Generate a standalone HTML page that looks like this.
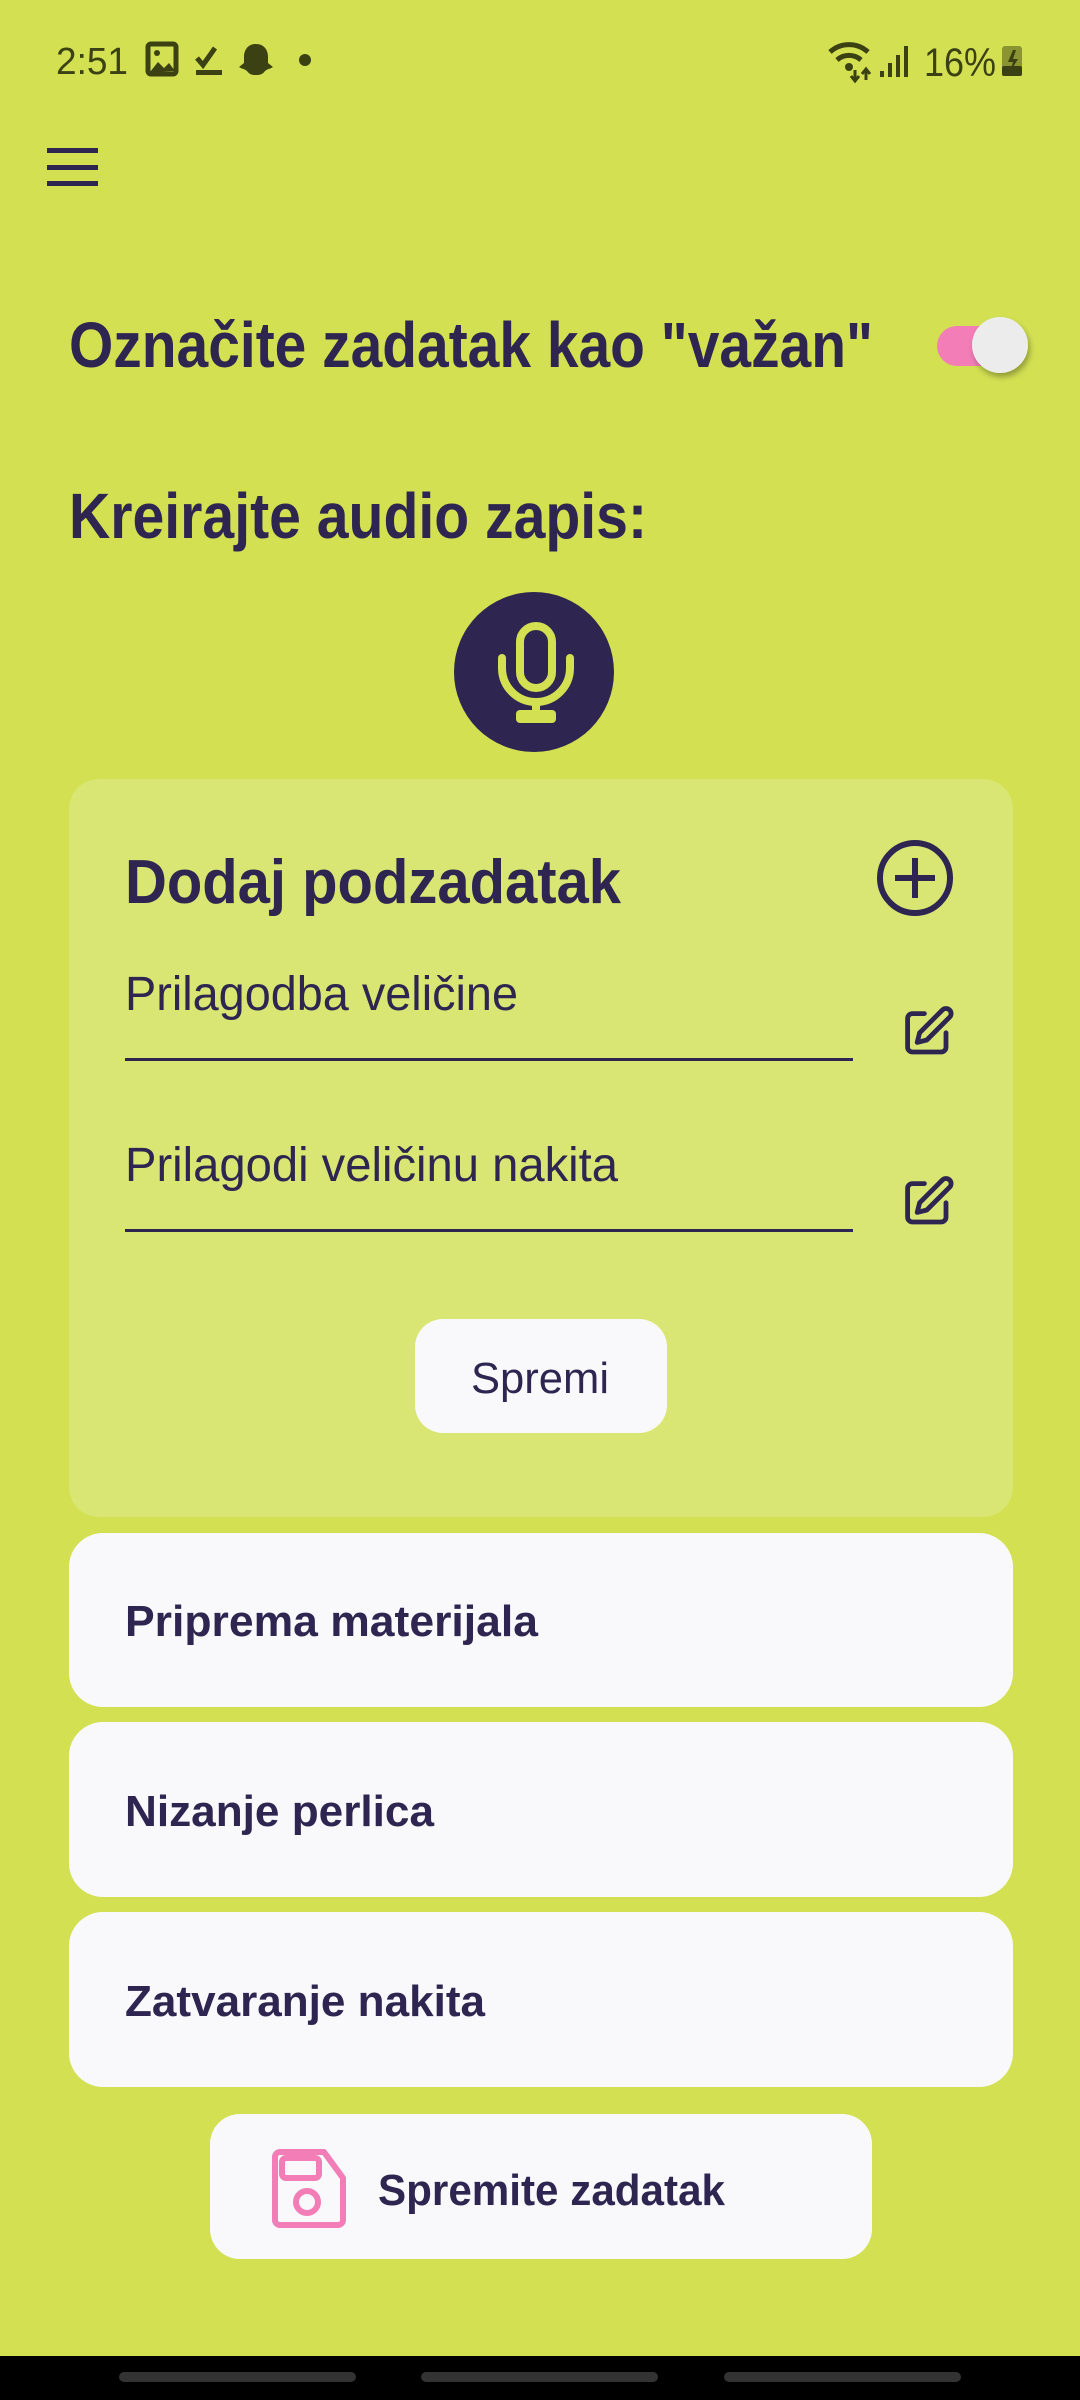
<!DOCTYPE html>
<html><head><meta charset="utf-8"><style>
html,body{margin:0;padding:0;width:1080px;height:2400px;overflow:hidden;background:#d2e052}
svg{display:block}
text{font-family:"Liberation Sans",sans-serif}
</style></head><body>
<svg width="1080" height="2400" viewBox="0 0 1080 2400" xmlns="http://www.w3.org/2000/svg">
<defs>
<filter id="sh" x="-50%" y="-50%" width="200%" height="200%"><feDropShadow dx="2" dy="4" stdDeviation="3" flood-color="#000" flood-opacity="0.3"/></filter>
</defs>
<rect width="1080" height="2400" fill="#d2e052"/>
<!-- status bar -->
<g fill="#3c4114">
<text x="56" y="74" font-size="38" textLength="72" lengthAdjust="spacingAndGlyphs">2:51</text>
<rect x="148" y="44" width="28" height="30" rx="3" fill="none" stroke="#3c4114" stroke-width="5"/>
<path d="M150 72 l8-10 6 6 5-5 6 8z"/>
<circle cx="157" cy="53" r="3"/>
<path d="M197 58 l6 7 12-17" fill="none" stroke="#3c4114" stroke-width="5"/>
<rect x="196" y="70" width="26" height="5"/>
<path d="M256 44 c-8 0-12 6-12 13 v6 l-5 4 c3 2 6 2 8 4 c3 4 6 4 9 4 s6 0 9-4 c2-2 5-2 8-4 l-5-4 v-6 c0-7-4-13-12-13z"/>
<circle cx="305" cy="60" r="6"/>
<path d="M830 52 a28 28 0 0 1 38 0" fill="none" stroke="#3c4114" stroke-width="5"/>
<path d="M837 60 a18 18 0 0 1 24 0" fill="none" stroke="#3c4114" stroke-width="5"/>
<circle cx="849" cy="67" r="4"/>
<path d="M855 70 v10 M851 76 l4 5 4-5 M866 80 v-10 M862 74 l4-5 4 5" fill="none" stroke="#3c4114" stroke-width="3"/>
<rect x="880" y="71" width="4" height="6"/><rect x="888" y="63" width="4" height="14"/><rect x="896" y="55" width="4" height="22"/><rect x="904" y="46" width="4" height="31"/>
<text x="924" y="76" font-size="40" textLength="72" lengthAdjust="spacingAndGlyphs">16%</text>
<rect x="1002" y="46" width="20" height="30" rx="3" fill="#8a9430"/>
<rect x="1002" y="66" width="20" height="10" rx="2"/>
<path d="M1013 50 l-5 12 h5 l-3 10 8-13 h-5 l3-9z"/>
</g>
<!-- hamburger -->
<g fill="#2e2650"><rect x="47" y="148" width="51" height="5"/><rect x="47" y="165" width="51" height="5"/><rect x="47" y="181" width="51" height="5"/></g>
<!-- title -->
<text x="69" y="367" font-size="64" font-weight="bold" fill="#2e2650" textLength="804" lengthAdjust="spacingAndGlyphs">Označite zadatak kao "važan"</text>
<rect x="937" y="326" width="70" height="40" rx="20" fill="#f27db7"/>
<circle cx="1000" cy="345" r="28" fill="#ececec" filter="url(#sh)"/>
<text x="69" y="538" font-size="64" font-weight="bold" fill="#2e2650" textLength="578" lengthAdjust="spacingAndGlyphs">Kreirajte audio zapis:</text>
<!-- mic -->
<circle cx="534" cy="672" r="80" fill="#2e2650"/>
<g fill="none" stroke="#d2e052" stroke-width="8" stroke-linecap="round">
<rect x="520" y="626" width="32" height="62" rx="16"/>
<path d="M502 658 v10 a34 34 0 0 0 68 0 v-10"/>
<path d="M536 702 v10"/>
</g>
<rect x="516" y="710" width="40" height="13" rx="4" fill="#d2e052"/>
<!-- card -->
<rect x="69" y="779" width="944" height="738" rx="30" fill="#d9e673"/>
<text x="125" y="903" font-size="62" font-weight="bold" fill="#2e2650" textLength="496" lengthAdjust="spacingAndGlyphs">Dodaj podzadatak</text>
<g fill="none" stroke="#2e2650" stroke-width="6">
<circle cx="915" cy="878" r="35"/>
<path d="M915 858 v40 M895 878 h40"/>
</g>
<text x="125" y="1010" font-size="48" fill="#2e2650" textLength="393" lengthAdjust="spacingAndGlyphs">Prilagodba veličine</text>
<rect x="125" y="1058" width="728" height="3" fill="#2e2650"/>
<text x="125" y="1181" font-size="48" fill="#2e2650" textLength="493" lengthAdjust="spacingAndGlyphs">Prilagodi veličinu nakita</text>
<rect x="125" y="1229" width="728" height="3" fill="#2e2650"/>
<g fill="none" stroke="#2e2650" stroke-width="2" stroke-linejoin="round" stroke-linecap="round">
<g transform="translate(898,1004) scale(2.4)"><path d="M11 4H6a2 2 0 0 0-2 2v12a2 2 0 0 0 2 2h12a2 2 0 0 0 2-2v-6"/><path d="M18.5 2.5a2.1 2.1 0 0 1 3 3L12 15l-4 1 1-4z"/></g>
<g transform="translate(898,1174) scale(2.4)"><path d="M11 4H6a2 2 0 0 0-2 2v12a2 2 0 0 0 2 2h12a2 2 0 0 0 2-2v-6"/><path d="M18.5 2.5a2.1 2.1 0 0 1 3 3L12 15l-4 1 1-4z"/></g>
</g>
<rect x="415" y="1319" width="252" height="114" rx="28" fill="#f9f9fb"/>
<text x="540" y="1393" font-size="44" fill="#2e2650" text-anchor="middle" textLength="138" lengthAdjust="spacingAndGlyphs">Spremi</text>
<!-- list -->
<rect x="69" y="1533" width="944" height="174" rx="34" fill="#f9f9fb"/>
<text x="125" y="1636" font-size="44" font-weight="bold" fill="#2e2650" textLength="413" lengthAdjust="spacingAndGlyphs">Priprema materijala</text>
<rect x="69" y="1722" width="944" height="175" rx="34" fill="#f9f9fb"/>
<text x="125" y="1826" font-size="44" font-weight="bold" fill="#2e2650" textLength="309" lengthAdjust="spacingAndGlyphs">Nizanje perlica</text>
<rect x="69" y="1912" width="944" height="175" rx="34" fill="#f9f9fb"/>
<text x="125" y="2016" font-size="44" font-weight="bold" fill="#2e2650" textLength="360" lengthAdjust="spacingAndGlyphs">Zatvaranje nakita</text>
<!-- save -->
<rect x="210" y="2114" width="662" height="145" rx="30" fill="#f9f9fb"/>
<g fill="none" stroke="#f27db7" stroke-width="6" stroke-linejoin="round">
<path d="M280 2152 h44 l19 26 v42 a5 5 0 0 1-5 5 h-58 a5 5 0 0 1-5-5 v-63 a5 5 0 0 1 5-5z"/>
<rect x="282" y="2158" width="37" height="20" rx="4"/>
<circle cx="307" cy="2202" r="11"/>
</g>
<text x="378" y="2205" font-size="44" font-weight="bold" fill="#2e2650" textLength="347" lengthAdjust="spacingAndGlyphs">Spremite zadatak</text>
<!-- nav -->
<rect x="0" y="2356" width="1080" height="44" fill="#000"/>
<rect x="119" y="2372" width="237" height="10" rx="5" fill="#333"/>
<rect x="421" y="2372" width="237" height="10" rx="5" fill="#333"/>
<rect x="724" y="2372" width="237" height="10" rx="5" fill="#333"/>
</svg>
</body></html>
